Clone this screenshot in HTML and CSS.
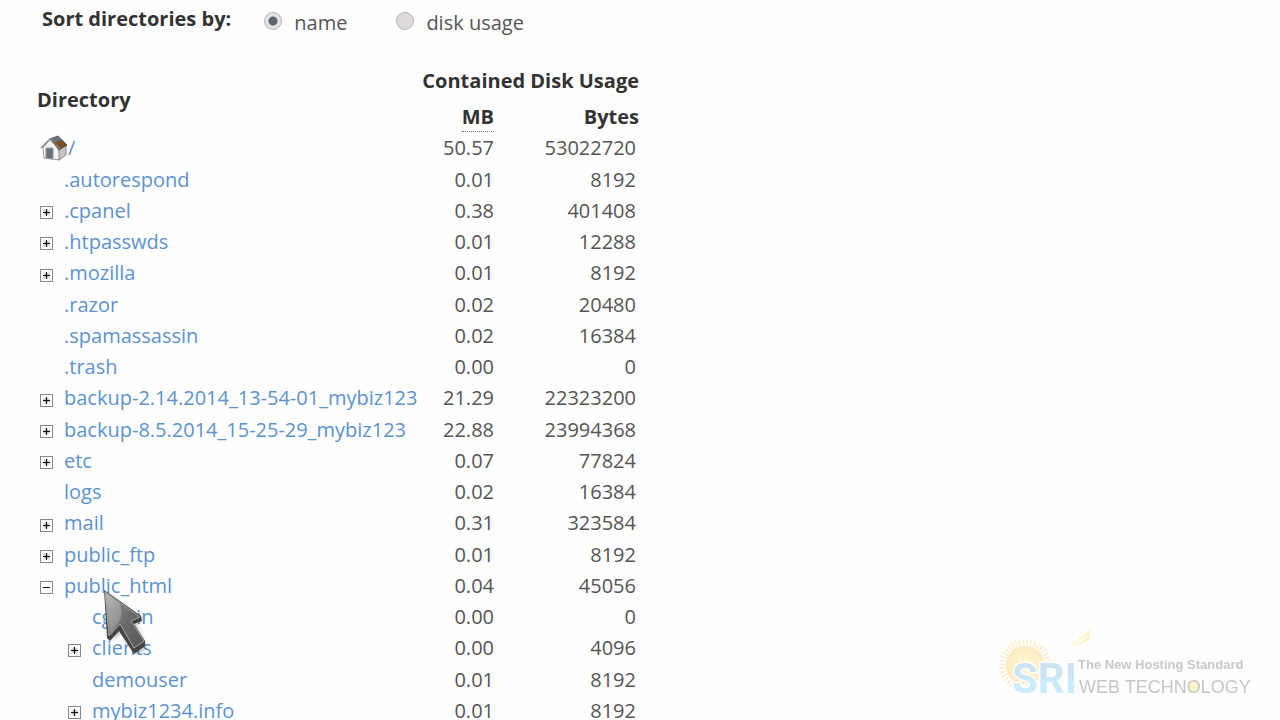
FILE: index.html
```html
<!DOCTYPE html>
<html lang="en">
<head>
    <meta charset="UTF-8">
    <meta name="viewport" content="width=device-width, initial-scale=1.0">
    <title>Disk Usage</title>
    <link rel="stylesheet" href="styles.css">
</head>
<body>
    <form class="sort-form">
        <strong class="sort-title">Sort directories by:</strong>
        <input type="radio" name="sort" id="sort-name" checked>
        <label for="sort-name">name</label>
        <input type="radio" name="sort" id="sort-usage">
        <label for="sort-usage">disk usage</label>
    </form>

    <table class="usage">
        <colgroup>
            <col class="col-dir">
            <col class="col-mb">
            <col class="col-bytes">
        </colgroup>
        <thead>
            <tr>
                <th rowspan="2" class="dir-head">Directory</th>
                <th colspan="2" class="group-head">Contained Disk Usage</th>
            </tr>
            <tr class="unit-heads">
                <th><abbr title="Megabytes">MB</abbr></th>
                <th>Bytes</th>
            </tr>
        </thead>
        <tbody>
            <tr>
                <td><div class="entry">
                    <svg class="home" viewBox="0 0 28 26" width="28" height="26">
                        <path d="M3 13 10 4 20 14V25L4 23Z" fill="#f3f3f3" stroke="#999"/>
                        <path d="M19 14 26 10V20L19 25Z" fill="#c4c4c4" stroke="#888"/>
                        <path d="M10 4 18 1 27 10 19 15Z" fill="#7a5226" stroke="#5d5145"/>
                        <path d="M10 4 18 1 23 5 14 7Z" fill="#68737a"/>
                        <path d="M1 13 10 4 20 14" fill="none" stroke="#888" stroke-width="1.5"/>
                        <path d="M6 13H13V24L6 23Z" fill="#68727a" stroke="#999"/>
                    </svg>
                    <a href="#">/</a>
                </div></td>
                <td>50.57</td><td>53022720</td>
            </tr>
            <tr>
                <td><div class="entry"><span class="no-toggle"></span><a href="#">.autorespond</a></div></td>
                <td>0.01</td><td>8192</td>
            </tr>
            <tr>
                <td><div class="entry"><button class="toggle" aria-label="Expand"></button><a href="#">.cpanel</a></div></td>
                <td>0.38</td><td>401408</td>
            </tr>
            <tr>
                <td><div class="entry"><button class="toggle" aria-label="Expand"></button><a href="#">.htpasswds</a></div></td>
                <td>0.01</td><td>12288</td>
            </tr>
            <tr>
                <td><div class="entry"><button class="toggle" aria-label="Expand"></button><a href="#">.mozilla</a></div></td>
                <td>0.01</td><td>8192</td>
            </tr>
            <tr>
                <td><div class="entry"><span class="no-toggle"></span><a href="#">.razor</a></div></td>
                <td>0.02</td><td>20480</td>
            </tr>
            <tr>
                <td><div class="entry"><span class="no-toggle"></span><a href="#">.spamassassin</a></div></td>
                <td>0.02</td><td>16384</td>
            </tr>
            <tr>
                <td><div class="entry"><span class="no-toggle"></span><a href="#">.trash</a></div></td>
                <td>0.00</td><td>0</td>
            </tr>
            <tr>
                <td><div class="entry"><button class="toggle" aria-label="Expand"></button><a href="#">backup-2.14.2014_13-54-01_mybiz123</a></div></td>
                <td>21.29</td><td>22323200</td>
            </tr>
            <tr>
                <td><div class="entry"><button class="toggle" aria-label="Expand"></button><a href="#">backup-8.5.2014_15-25-29_mybiz123</a></div></td>
                <td>22.88</td><td>23994368</td>
            </tr>
            <tr>
                <td><div class="entry"><button class="toggle" aria-label="Expand"></button><a href="#">etc</a></div></td>
                <td>0.07</td><td>77824</td>
            </tr>
            <tr>
                <td><div class="entry"><span class="no-toggle"></span><a href="#">logs</a></div></td>
                <td>0.02</td><td>16384</td>
            </tr>
            <tr>
                <td><div class="entry"><button class="toggle" aria-label="Expand"></button><a href="#">mail</a></div></td>
                <td>0.31</td><td>323584</td>
            </tr>
            <tr>
                <td><div class="entry"><button class="toggle" aria-label="Expand"></button><a href="#">public_ftp</a></div></td>
                <td>0.01</td><td>8192</td>
            </tr>
            <tr>
                <td><div class="entry">
                    <button class="toggle open" aria-label="Collapse"></button><a href="#">public_html</a>
                    <svg class="cursor" viewBox="0 0 54 72" width="54" height="72">
                        <defs>
                            <linearGradient id="arrow-fill" x1="0" y1="0" x2="1" y2="1">
                                <stop offset="0" stop-color="#a5a5a5"/>
                                <stop offset="0.5" stop-color="#6c6c6c"/>
                                <stop offset="1" stop-color="#585858"/>
                            </linearGradient>
                            <filter id="arrow-blur"><feGaussianBlur stdDeviation="2"/></filter>
                        </defs>
                        <path d="M8 7 13 53 23 43 37 68 46 60 35 36 43 32Z" fill="#000" opacity="0.3" filter="url(#arrow-blur)"/>
                        <path d="M4 3 7 51 10 54 19 44 34 67 45 59 45 54 34 37 42 34 41 29Z" fill="#444"/>
                        <path d="M5 5 9 49 20 37 34 61 44 54 31 34 40 30Z" fill="url(#arrow-fill)" stroke="#a5a5a5"/>
                        <path d="M6 6 10 47 17 38Q24 29 20 17Z" fill="#fff" opacity="0.22"/>
                    </svg>
                </div></td>
                <td>0.04</td><td>45056</td>
            </tr>
            <tr>
                <td><div class="entry child"><span class="no-toggle"></span><a href="#">cgi-bin</a></div></td>
                <td>0.00</td><td>0</td>
            </tr>
            <tr>
                <td><div class="entry child"><button class="toggle" aria-label="Expand"></button><a href="#">clients</a></div></td>
                <td>0.00</td><td>4096</td>
            </tr>
            <tr>
                <td><div class="entry child"><span class="no-toggle"></span><a href="#">demouser</a></div></td>
                <td>0.01</td><td>8192</td>
            </tr>
            <tr>
                <td><div class="entry child"><button class="toggle" aria-label="Expand"></button><a href="#">mybiz1234.info</a></div></td>
                <td>0.01</td><td>8192</td>
            </tr>
        </tbody>
    </table>

    <svg class="watermark" viewBox="0 0 256 72" width="256" height="72">
        <defs>
            <linearGradient id="sri-fill" x1="0" y1="0" x2="0" y2="1">
                <stop offset="0.5" stop-color="#cce4f2"/>
                <stop offset="0.5" stop-color="#c8ecfb"/>
            </linearGradient>
            <radialGradient id="sun-fill">
                <stop offset="0" stop-color="#fffbd2"/>
                <stop offset="1" stop-color="#fde9c4"/>
            </radialGradient>
        </defs>
        <circle cx="27" cy="38" r="22" fill="none" stroke="#fcedc8" stroke-width="8" stroke-dasharray="1.4 2.2"/>
        <circle cx="27" cy="38" r="19" fill="url(#sun-fill)"/>
        <path d="M73 20Q74 16 82 11Q90 6 93 0Q94 7 88 10Q78 15 73 20ZM77 21Q79 17 84 14Q90 11 91 7Q93 13 87 15Q81 17 77 21Z" fill="#fcf6c3"/>
        <ellipse cx="196" cy="60" rx="6" ry="6" fill="#faf5c2"/>
        <text class="mark-sri" x="14" y="66">SRI</text>
        <text class="mark-tag" x="80" y="42">The New Hosting Standard</text>
        <text class="mark-name" x="81" y="66">WEB TECHNOLOGY</text>
    </svg>
</body>
</html>
```
FILE: styles.css
```css
* {
    box-sizing: border-box;
}
body {
    margin: 0;
    padding: 4px 37px 0;
    background: #fefefe;
    color: #555;
    font-family: "Open Sans", "Noto Sans", sans-serif;
    font-size: 20px;
    line-height: 30px;
}
a {
    color: #5c93cd;
    text-decoration: none;
}

/* sort options */
.sort-form {
    display: flex;
    align-items: flex-start;
    padding-left: 5px;
    height: 58px;
}
.sort-title {
    margin-right: 33px;
    color: #333;
}
.sort-form label {
    margin: 4px 49px 0 12px;
}
input[type="radio"] {
    appearance: none;
    flex: none;
    width: 18px;
    height: 18px;
    margin: 8px 0 0;
    border: 1px solid #b5b5b5;
    border-radius: 50%;
    background: #dedada;
}
input[type="radio"]:checked {
    background: radial-gradient(circle, #5c666b 4px, #e4e2e2 5px);
}

/* directory table */
.usage {
    width: 602px;
    table-layout: fixed;
    border-collapse: collapse;
}
.col-dir {
    width: 380px;
}
.col-mb {
    width: 77px;
}
.usage th,
.usage td {
    padding: 0;
    text-align: right;
    white-space: nowrap;
}
.usage th {
    height: 32px;
    color: #333;
}
.usage .group-head {
    height: 38px;
}
.usage .dir-head {
    padding-top: 6px;
}
.usage .unit-heads th {
    padding-top: 2px;
}
.usage .dir-head,
.usage td:first-child {
    text-align: left;
}
.usage td {
    height: 31px;
}
.usage tbody tr:nth-child(4n + 1) td {
    height: 32px;
}
.usage td:last-child {
    padding-right: 3px;
}
abbr[title] {
    display: inline-block;
    line-height: 28px;
    text-decoration: none;
    border-bottom: 1px dotted #777;
}
.entry {
    display: flex;
    position: relative;
    align-items: center;
    padding-left: 3px;
}
.child {
    padding-left: 31px;
}
.home {
    flex: none;
}
.no-toggle,
.toggle {
    flex: none;
    width: 13px;
    height: 13px;
    margin: 4px 11px 0 0;
}
.toggle {
    padding: 0;
    border: 1px solid #888;
    background:
        linear-gradient(#111, #111) center / 7px 1px no-repeat,
        linear-gradient(#111, #111) center / 1px 7px no-repeat,
        radial-gradient(#aaa 1px, #fff 4px);
}
.toggle.open {
    background: linear-gradient(#111, #111) center / 7px 1px no-repeat, #fff;
}
.cursor {
    position: absolute;
    z-index: 1;
    left: 63px;
    top: 16px;
}

/* company watermark */
.watermark {
    position: fixed;
    right: 26px;
    bottom: 21px;
}
.mark-sri {
    fill: url(#sri-fill);
    stroke: #fefefe;
    stroke-width: 3px;
    paint-order: stroke;
    font-family: Roboto, sans-serif;
    font-size: 42px;
    font-weight: bold;
}
.mark-tag {
    fill: #c8c8c8;
    font-family: "Liberation Sans", sans-serif;
    font-size: 13px;
    font-weight: bold;
}
.mark-name {
    fill: #c6c6c6;
    font-family: "Liberation Sans", sans-serif;
    font-size: 18px;
}
```
